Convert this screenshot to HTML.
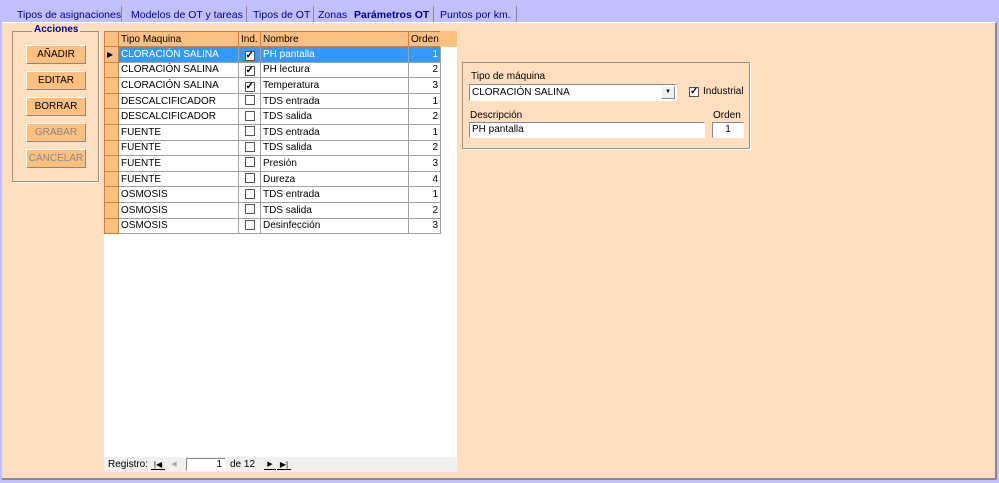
<!DOCTYPE html>
<html><head><meta charset="utf-8"><style>
*{box-sizing:border-box;margin:0;padding:0}
body{width:999px;height:483px;background:#c0c0ff;position:relative;overflow:hidden;font-family:"Liberation Sans",sans-serif;font-size:10px;color:#000}
.abs{position:absolute}
.panel{left:2px;top:22px;width:995px;height:458px;background:#ffdfbf;border-top:1px solid #fff;border-right:2px solid #888;border-bottom:2px solid #888}
.tab{position:absolute;top:8px;height:14px;line-height:14px;color:#00008b;font-size:10.5px;white-space:nowrap}
.sep{position:absolute;top:6px;width:1px;height:16px;background:#888}
.btn{position:absolute;left:26px;width:60px;height:19px;background:#ffbf7f;border:1px solid;border-color:#fff #888 #888 #fff;text-align:center;line-height:17px;font-size:10px}
.grid{left:104px;top:31px;width:353px;height:441px;background:#fff}
table{border-collapse:collapse;position:absolute;left:0;top:0;table-layout:fixed}
td{height:15.6px;border:1px solid #a0a0a0;padding:0 2px;white-space:nowrap;overflow:hidden;font-size:10px;line-height:13px}
td.s{background:#ffbf7f;border-color:#d08040}
th{background:#ffbf7f;font-weight:normal;text-align:left;border:1px solid #d08040;padding:0 2px;height:15px;font-size:10px;white-space:nowrap;overflow:hidden}
.r{text-align:right}
.cb{display:inline-block;width:10px;height:10px;border:1px solid #555;background:#fff;position:relative;top:1px;font-size:10px;line-height:8px;text-align:center;font-weight:bold}
.sel td{background:#3399ff;color:#fff}
.sel td.s{background:#ffbf7f;color:#000}
.nav{left:0;top:426px;width:353px;height:15px;background:#f0f0f0;font-size:10px;line-height:15px}
</style></head><body>
<div class="tab" style="left:17px">Tipos de asignaciones</div>
<div class="sep" style="left:121px"></div>
<div class="tab" style="left:131px">Modelos de OT y tareas</div>
<div class="sep" style="left:246px"></div>
<div class="tab" style="left:253px">Tipos de OT</div>
<div class="sep" style="left:313px"></div>
<div class="tab" style="left:318px">Zonas</div>
<div class="tab" style="left:354px;font-weight:bold;color:#00008b">Parámetros OT</div>
<div class="sep" style="left:433px"></div>
<div class="tab" style="left:440px">Puntos por km.</div>
<div class="sep" style="left:516px"></div>
<div class="abs panel"></div>
<div class="abs" style="left:12px;top:31px;width:87px;height:151px;border:1px solid #a09080;box-shadow:1px 1px 0 #fff"></div>
<div class="abs" style="left:32px;top:24px;background:#ffdfbf;color:#00008b;font-weight:bold;padding:0 2px">Acciones</div>
<div class="btn" style="top:45px">AÑADIR</div>
<div class="btn" style="top:71px">EDITAR</div>
<div class="btn" style="top:97px">BORRAR</div>
<div class="btn" style="top:123px;color:#888">GRABAR</div>
<div class="btn" style="top:149px;color:#888">CANCELAR</div>
<div class="abs grid">
<table style="width:336px">
<colgroup><col style="width:14px"><col style="width:120px"><col style="width:22px"><col style="width:148px"><col style="width:32px"></colgroup>
<tr><th></th><th>Tipo Maquina</th><th>Ind.</th><th>Nombre</th><th>Orden</th></tr>
<tr class="sel"><td class="s" style="font-size:8px">&#9654;</td><td>CLORACIÓN SALINA</td><td style="text-align:center"><span class="cb" style="color:#000">✓</span></td><td>PH pantalla</td><td class="r">1</td></tr>
<tr><td class="s"></td><td>CLORACIÓN SALINA</td><td style="text-align:center"><span class="cb">✓</span></td><td>PH lectura</td><td class="r">2</td></tr>
<tr><td class="s"></td><td>CLORACIÓN SALINA</td><td style="text-align:center"><span class="cb">✓</span></td><td>Temperatura</td><td class="r">3</td></tr>
<tr><td class="s"></td><td>DESCALCIFICADOR</td><td style="text-align:center"><span class="cb"></span></td><td>TDS entrada</td><td class="r">1</td></tr>
<tr><td class="s"></td><td>DESCALCIFICADOR</td><td style="text-align:center"><span class="cb"></span></td><td>TDS salida</td><td class="r">2</td></tr>
<tr><td class="s"></td><td>FUENTE</td><td style="text-align:center"><span class="cb"></span></td><td>TDS entrada</td><td class="r">1</td></tr>
<tr><td class="s"></td><td>FUENTE</td><td style="text-align:center"><span class="cb"></span></td><td>TDS salida</td><td class="r">2</td></tr>
<tr><td class="s"></td><td>FUENTE</td><td style="text-align:center"><span class="cb"></span></td><td>Presión</td><td class="r">3</td></tr>
<tr><td class="s"></td><td>FUENTE</td><td style="text-align:center"><span class="cb"></span></td><td>Dureza</td><td class="r">4</td></tr>
<tr><td class="s"></td><td>OSMOSIS</td><td style="text-align:center"><span class="cb"></span></td><td>TDS entrada</td><td class="r">1</td></tr>
<tr><td class="s"></td><td>OSMOSIS</td><td style="text-align:center"><span class="cb"></span></td><td>TDS salida</td><td class="r">2</td></tr>
<tr><td class="s"></td><td>OSMOSIS</td><td style="text-align:center"><span class="cb"></span></td><td>Desinfección</td><td class="r">3</td></tr>
</table>
<div class="abs" style="left:336px;top:0;width:17px;height:16px;background:#ffbf7f"></div>
<div class="abs nav"><span style="position:absolute;left:4px">Registro:</span>
<span style="position:absolute;left:47px;top:2px;width:14px;height:11px;border-bottom:1px solid #000;font-size:8px;line-height:11px;text-align:center">|◀</span>
<span style="position:absolute;left:64px;top:2px;width:12px;height:11px;color:#aaa;font-size:7px;line-height:11px;text-align:center">◀</span>
<span style="position:absolute;left:82px;top:1px;width:40px;height:13px;background:#fff;border:1px solid;border-color:#888 #fff #fff #888;text-align:right;padding-right:3px;line-height:11px">1</span>
<span style="position:absolute;left:126px">de 12</span>
<span style="position:absolute;left:160px;top:2px;width:12px;height:11px;border-bottom:1px solid #000;font-size:7px;line-height:11px;text-align:center">▶</span>
<span style="position:absolute;left:173px;top:2px;width:14px;height:11px;border-bottom:1px solid #000;font-size:8px;line-height:11px;text-align:center">▶|</span>
</div>
</div>
<div class="abs" style="left:462px;top:62px;width:288px;height:87px;border:1px solid #a09080;box-shadow:1px 1px 0 #fff"></div>
<div class="abs" style="left:471px;top:71px">Tipo de máquina</div>
<div class="abs" style="left:469px;top:84px;width:208px;height:17px;background:#fff;border:1px solid;border-color:#888 #fff #fff #888;padding-left:2px;line-height:15px">CLORACIÓN SALINA</div>
<div class="abs" style="left:661px;top:86px;width:14px;height:13px;background:#f0f0f0;border:1px solid;border-color:#fff #888 #888 #fff;font-size:6px;text-align:center;line-height:11px">▼</div>
<div class="abs" style="left:689px;top:85px"><span class="cb">✓</span></div>
<div class="abs" style="left:703px;top:86px">Industrial</div>
<div class="abs" style="left:470px;top:110px">Descripción</div>
<div class="abs" style="left:713px;top:110px">Orden</div>
<div class="abs" style="left:469px;top:122px;width:236px;height:16px;background:#fff;border:1px solid;border-color:#888 #fff #fff #888;padding-left:2px;line-height:14px">PH pantalla</div>
<div class="abs" style="left:712px;top:122px;width:32px;height:16px;background:#fff;border:1px solid;border-color:#888 #fff #fff #888;text-align:center;line-height:14px">1</div>
</body></html>
